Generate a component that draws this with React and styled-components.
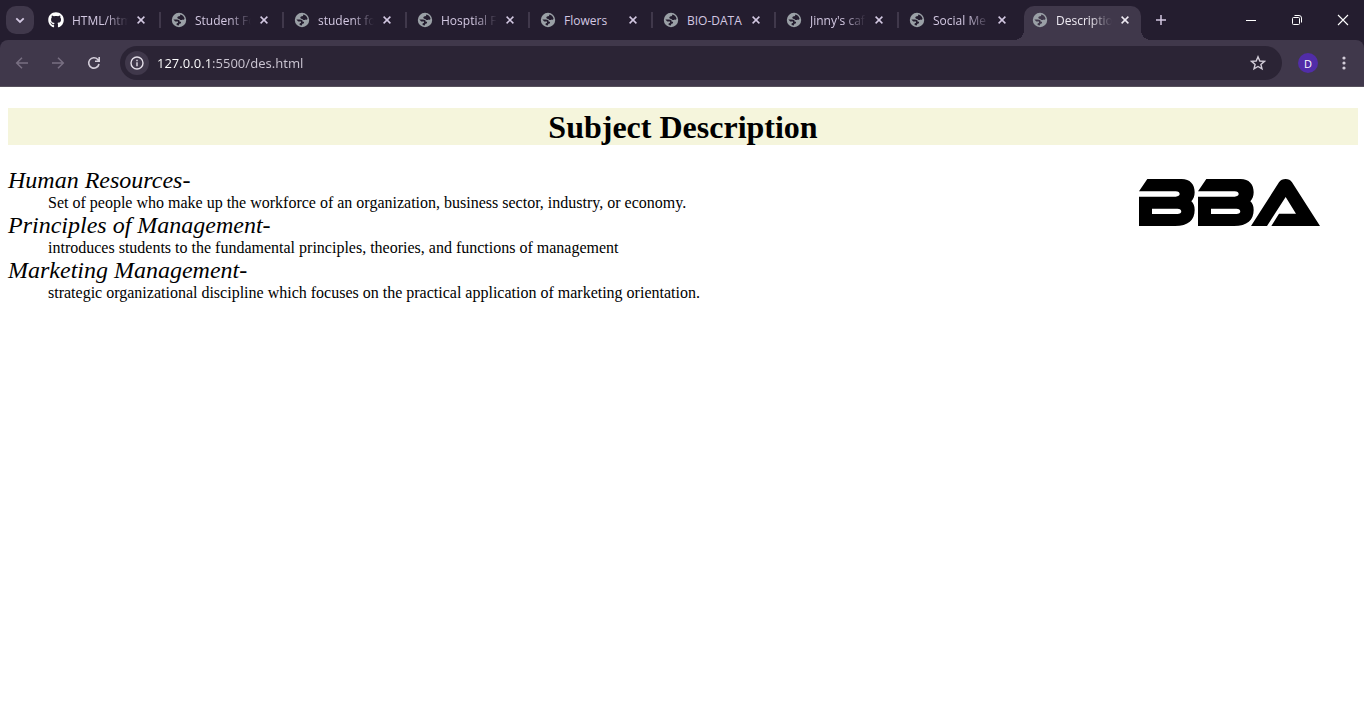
import React from 'react';
import styled, { createGlobalStyle, css } from 'styled-components';
import { FaGithub } from 'react-icons/fa';

const GlobalStyle = createGlobalStyle`
  *, *::before, *::after { box-sizing: border-box; }
  body { margin: 0; background: #fff; }
  button { padding: 0; border: 0; background: none; color: inherit; font: inherit; }
`;

const Browser = styled.div`
  display: flex;
  flex-direction: column;
  min-height: 100vh;
`;

const Chrome = styled.header`
  background: #241d2f;
  color: #d3c8e2;
  font-family: "Open Sans", "Noto Sans", sans-serif;
  font-size: 12px;
`;

const TabStrip = styled.div`
  display: flex;
  align-items: flex-start;
  height: 40px;
  padding-left: 6px;
`;

const StripButton = styled.button`
  display: grid;
  place-items: center;
  flex: none;
  width: 28px;
  height: 28px;
  margin: 6px 6px 0 0;
  border-radius: 10px;
  background: ${(p) => (p.$filled ? '#40384b' : 'transparent')};
`;

const Tabs = styled.nav`
  display: flex;
  flex: 1;
  min-width: 0;
  max-width: 1101px;
  margin-right: 6px;
  padding-top: 6px;
`;

const Separator = styled.span`
  flex: none;
  width: 2px;
  height: 16px;
  margin: 6px 2px 0;
  background: ${(p) => (p.$hidden ? 'transparent' : '#40384b')};
`;

const Tab = styled.div`
  position: relative;
  display: flex;
  align-items: center;
  flex: 1;
  min-width: 0;
  height: 34px;
  padding: 0 8px 6px;
  border-radius: 10px 10px 0 0;
  ${(p) =>
    p.$active &&
    css`
      background: #40384b;
      color: #eeeaf2;
      &::before,
      &::after {
        content: '';
        position: absolute;
        bottom: 0;
        width: 10px;
        height: 10px;
      }
      &::before {
        right: 100%;
        background: radial-gradient(circle at 0 0, transparent 10px, #40384b 10px);
      }
      &::after {
        left: 100%;
        background: radial-gradient(circle at 100% 0, transparent 10px, #40384b 10px);
      }
    `}
`;

const TabLabel = styled.button`
  display: flex;
  align-items: center;
  gap: 8px;
  flex: 1;
  min-width: 0;
  height: 28px;
  text-align: left;
  svg { flex: none; }
`;

const Title = styled.span`
  width: 56px;
  padding-top: 2px;
  overflow: hidden;
  white-space: nowrap;
  line-height: 18px;
  ${(p) => p.$fade && css`mask-image: linear-gradient(90deg, #000 34px, transparent);`}
`;

const CloseButton = styled.button`
  display: grid;
  place-items: center;
  flex: none;
  width: 16px;
  height: 16px;
`;

const WindowControls = styled.div`
  display: flex;
  gap: 4px;
  margin-left: auto;
  color: #fff;
`;

const WindowButton = styled.button`
  display: grid;
  place-items: center;
  width: 42px;
  height: 40px;
`;

const Toolbar = styled.div`
  display: flex;
  align-items: center;
  height: 47px;
  padding: 0 2px 0 4px;
  border-bottom: 1px solid #57515c;
  border-radius: 8px 8px 0 0;
  background: #40384b;
`;

const ToolButton = styled.button`
  display: grid;
  place-items: center;
  flex: none;
  width: 36px;
  height: 34px;
  color: ${(p) => (p.$muted ? '#786f82' : '#d3cdd9')};
`;

const AddressBar = styled.div`
  display: flex;
  align-items: center;
  flex: 1;
  min-width: 0;
  height: 34px;
  margin: 0 8px;
  padding: 0 6px 0 5px;
  border-radius: 17px;
  background: #2b2435;
`;

const InfoButton = styled.button`
  display: grid;
  place-items: center;
  flex: none;
  width: 24px;
  height: 24px;
  margin-right: 8px;
  border-radius: 50%;
  background: #40384b;
  color: #e3dee8;
`;

const Address = styled.input`
  flex: 1;
  min-width: 0;
  height: 24px;
  padding: 0;
  border: 0;
  outline: 0;
  background: linear-gradient(90deg, #fff 55px, #cbc5d2 55px);
  background-clip: text;
  color: transparent;
  font-family: "Noto Sans", "Open Sans", sans-serif;
  font-size: 13px;
`;

const Avatar = styled.span`
  display: grid;
  place-items: center;
  width: 20px;
  height: 20px;
  border-radius: 50%;
  background: #512da8;
  color: #fff;
  font-size: 11px;
`;

const Page = styled.main`
  padding: 21px 6px 0 8px;
  color: #000;
  font-family: "Liberation Serif", "Times New Roman", serif;
  font-size: 16px;
`;

const Heading = styled.h1`
  margin: 0 0 21px;
  padding-top: 2px;
  background: beige;
  font-size: 32px;
  line-height: 35px;
  text-align: center;
`;

const Content = styled.div`
  display: flex;
  justify-content: space-between;
  align-items: flex-start;
`;

const Subjects = styled.dl`
  margin: 0;
`;

const Term = styled.dt`
  font-size: 24px;
  font-style: italic;
  line-height: 29px;
`;

const Details = styled.dd`
  margin-left: 40px;
  line-height: 16px;
`;

const Logo = styled.svg`
  flex: none;
  width: 181px;
  height: 47px;
  margin: 13px 38px 0 0;
`;

const Globe = () => (
  <svg width="16" height="16" viewBox="0 0 16 16" aria-hidden="true">
    <path
      fill="#9aa0a6"
      fillRule="evenodd"
      d="M8 0.8 A7.2 7.2 0 1 1 8 15.2 A7.2 7.2 0 1 1 8 0.8 Z
         M9.3 2.5 C11.3 2.9 13 4.4 13.5 6.5 C13.4 7.6 12.5 8 11.5 7.5 C10.8 8.4 8.6 8.3 8.5 7 C6.4 7.1 5.6 5.4 7 4.5 L9 4.1 Z
         M2.4 7.6 H5.5 C7.6 7.5 8.8 8.3 8.7 9.7 H10 C10.3 11 9.6 11.8 8.4 11.8 L7.8 13.6 C6.8 13.5 6.2 13.3 5.6 13 V11.6 L7 10.8 V9.6 H4.2 Z"
    />
  </svg>
);

const Stroke = ({ d, size = 16, width = 1.5 }) => (
  <svg width={size} height={size} viewBox="0 0 16 16" fill="none" stroke="currentColor" strokeWidth={width} aria-hidden="true">
    <path d={d} />
  </svg>
);

const tabs = [
  { title: 'HTML/htm', github: true, fade: true },
  { title: 'Student Fo', fade: true },
  { title: 'student fo', fade: true },
  { title: 'Hosptial F', fade: true },
  { title: 'Flowers' },
  { title: 'BIO-DATA' },
  { title: "Jinny's caf", fade: true },
  { title: 'Social Me', fade: true },
  { title: 'Descriptio', fade: true, active: true },
];

const subjects = [
  ['Human Resources-', 'Set of people who make up the workforce of an organization, business sector, industry, or economy.'],
  ['Principles of Management-', 'introduces students to the fundamental principles, theories, and functions of management'],
  ['Marketing Management-', 'strategic organizational discipline which focuses on the practical application of marketing orientation.'],
];

const letterB =
  'M25 0 H128 C153 0 167 16 167 40 C167 52 163 60 157 67 C163 73 167 80 167 93 C167 123 148 141 108 141 H0 V53 H110 C126 53 126 37 110 37 H0 Z M39 89 V105 H115 C131 105 131 89 115 89 Z';

export default function App() {
  return (
    <Browser>
      <GlobalStyle />
      <Chrome>
        <TabStrip>
          <StripButton $filled aria-label="Search tabs">
            <Stroke d="M4.3 6.3 L8 10 L11.7 6.3" width={1.8} />
          </StripButton>
          <Tabs aria-label="Tabs">
            {tabs.map((tab, i) => (
              <React.Fragment key={tab.title}>
                {i > 0 && <Separator $hidden={tab.active} />}
                <Tab $active={tab.active}>
                  <TabLabel>
                    {tab.github ? <FaGithub size={16} color="#fff" /> : <Globe />}
                    <Title $fade={tab.fade}>{tab.title}</Title>
                  </TabLabel>
                  <CloseButton aria-label={`Close ${tab.title}`}>
                    <Stroke d="M4.6 4.6 L11.4 11.4 M11.4 4.6 L4.6 11.4" />
                  </CloseButton>
                </Tab>
              </React.Fragment>
            ))}
          </Tabs>
          <StripButton aria-label="New tab">
            <Stroke d="M8 3 V13 M3 8 H13" />
          </StripButton>
          <WindowControls>
            <WindowButton aria-label="Minimize">
              <Stroke d="M3 8.5 H13" width={1} />
            </WindowButton>
            <WindowButton aria-label="Restore">
              <Stroke
                d="M4.5 5.5 H9.5 Q10.5 5.5 10.5 6.5 V11.5 Q10.5 12.5 9.5 12.5 H4.5 Q3.5 12.5 3.5 11.5 V6.5 Q3.5 5.5 4.5 5.5 M5.5 3.5 H10 Q12.5 3.5 12.5 6 V10.5"
                width={1}
              />
            </WindowButton>
            <WindowButton aria-label="Close window">
              <Stroke d="M3 3 L13 13 M13 3 L3 13" width={1.1} />
            </WindowButton>
          </WindowControls>
        </TabStrip>
        <Toolbar>
          <ToolButton $muted aria-label="Back">
            <Stroke d="M14 8 H3 M8 2.7 L2.7 8 L8 13.3" />
          </ToolButton>
          <ToolButton $muted aria-label="Forward">
            <Stroke d="M2 8 H13 M8 2.7 L13.3 8 L8 13.3" />
          </ToolButton>
          <ToolButton aria-label="Reload">
            <Stroke d="M13 9 A5.2 5.2 0 1 1 11.8 4.5 L13 5.8 M13.2 2 V6.3 H9" width={1.6} />
          </ToolButton>
          <AddressBar>
            <InfoButton aria-label="Site information">
              <svg width="16" height="16" viewBox="0 0 16 16" fill="none" stroke="currentColor" strokeWidth="1.4" aria-hidden="true">
                <circle cx="8" cy="8" r="6" />
                <path d="M8 7.3 V11.2 M8 4.7 V6.2" />
              </svg>
            </InfoButton>
            <Address aria-label="Address" defaultValue="127.0.0.1:5500/des.html" />
            <ToolButton aria-label="Bookmark this page">
              <Stroke d="M8 1.8 L9.8 6 L14.4 6.4 L10.9 9.4 L12 13.9 L8 11.5 L4 13.9 L5.1 9.4 L1.6 6.4 L6.2 6 Z" width={1.4} />
            </ToolButton>
          </AddressBar>
          <ToolButton aria-label="Profile">
            <Avatar>D</Avatar>
          </ToolButton>
          <ToolButton aria-label="Menu">
            <svg width="16" height="16" viewBox="0 0 16 16" fill="currentColor" aria-hidden="true">
              <circle cx="8" cy="3" r="1.6" />
              <circle cx="8" cy="8" r="1.6" />
              <circle cx="8" cy="13" r="1.6" />
            </svg>
          </ToolButton>
        </Toolbar>
      </Chrome>
      <Page>
        <Heading>Subject Description</Heading>
        <Content>
          <Subjects>
            {subjects.map(([term, details]) => (
              <React.Fragment key={term}>
                <Term>{term}</Term>
                <Details>{details}</Details>
              </React.Fragment>
            ))}
          </Subjects>
          <Logo viewBox="0 0 543 141" role="img" aria-label="BBA logo">
            <path fillRule="evenodd" d={letterB} />
            <path fillRule="evenodd" d={letterB} transform="translate(177 0)" />
            <path d="M336 141 L420 10 Q427 0 440 0 Q452 0 459 10 L543 141 H397 L420 104 H471 L440 54 L384 141 Z" />
          </Logo>
        </Content>
      </Page>
    </Browser>
  );
}
